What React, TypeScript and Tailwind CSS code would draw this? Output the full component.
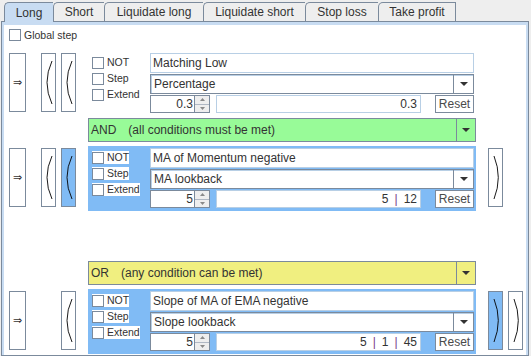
import React from 'react';

type Paren = 'none' | 'white' | 'blue';

interface Condition {
  name: string;
  param: string;
  spin: string;
  value: string[];
  active: boolean;
  left: [Paren, Paren];
  right: [Paren, Paren];
}

const TABS = [
  { label: 'Long', w: 'w-[49px]', active: true },
  { label: 'Short', w: 'w-[51px]' },
  { label: 'Liquidate long', w: 'w-[99px]' },
  { label: 'Liquidate short', w: 'w-[102px]' },
  { label: 'Stop loss', w: 'w-[73px]' },
  { label: 'Take profit', w: 'w-[78px] border-r' },
];

const CONDITIONS: Condition[] = [
  { name: 'Matching Low', param: 'Percentage', spin: '0.3', value: ['0.3'], active: false, left: ['white', 'white'], right: ['none', 'none'] },
  { name: 'MA of Momentum negative', param: 'MA lookback', spin: '5', value: ['5', '12'], active: true, left: ['white', 'blue'], right: ['white', 'none'] },
  { name: 'Slope of MA of EMA negative', param: 'Slope lookback', spin: '5', value: ['5', '1', '45'], active: true, left: ['none', 'white'], right: ['blue', 'white'] },
];

const DownTri = () => (
  <svg width="8" height="4" viewBox="0 0 8 4">
    <polygon points="0,0 8,0 4,4" fill="#333333" />
  </svg>
);

const CheckItem = ({ label }: { label: string }) => (
  <div className="flex items-center h-[13px] bg-white self-start">
    <div className="w-[12px] h-[12px] border border-[#7b8a9c] bg-white" />
    <span className="ml-[3px] text-[10.5px] leading-none">{label}</span>
  </div>
);

const ParenSlot = ({ kind, side }: { kind: Paren; side: 'l' | 'r' }) => {
  if (kind === 'none') return <div className="w-[15px] shrink-0" />;
  return (
    <div className={`w-[15px] h-[59px] mt-[2px] shrink-0 border border-[#7b8a9c] ${kind === 'blue' ? 'bg-[#80bbf5]' : 'bg-white'}`}>
      <svg width="13" height="57" viewBox="0 0 13 57">
        <path d={side === 'l' ? 'M10 7 Q0 28.5 10 50' : 'M5 7 Q13.6 28.5 5 50'} stroke="#000" strokeWidth="0.9" fill="none" />
      </svg>
    </div>
  );
};

const Row = ({ c, className }: { c: Condition; className: string }) => (
  <div className={`flex items-start ${className}`}>
    <div className="w-[17px] h-[59px] mt-[2px] shrink-0 border border-[#7b8a9c] bg-white flex items-center justify-center text-[11px] font-['DejaVu_Sans',sans-serif]">
      ⇒
    </div>
    <div className="ml-[15px]"><ParenSlot kind={c.left[0]} side="l" /></div>
    <div className="ml-[5px]"><ParenSlot kind={c.left[1]} side="l" /></div>
    <div className={`ml-[12px] w-[388px] h-[65px] shrink-0 flex pt-[2px] pl-[2px] pr-[2px] ${c.active ? 'bg-[#80bbf5]' : ''}`}>
      <div className="w-[60px] pl-[2px] pt-[3px] flex flex-col gap-[3px]">
        <CheckItem label="NOT" />
        <CheckItem label="Step" />
        <CheckItem label="Extend" />
      </div>
      <div className="w-[324px] flex flex-col">
        <div className="h-[20px] border border-[#b8cfe5] bg-white flex items-center pl-[2px]">{c.name}</div>
        <div className="h-[20px] mt-[1px] border border-[#7b8a9c] bg-white flex shadow-[inset_1px_1px_0_#b8cfe5]">
          <div className="flex-1 flex items-center pl-[3px]">{c.param}</div>
          <div className="w-[20px] border-l border-[#7b8a9c] flex items-center justify-center">
            <DownTri />
          </div>
        </div>
        <div className="h-[18px] mt-[1px] flex">
          <div className="w-[60px] border border-[#7b8a9c] bg-white flex">
            <div className="flex-1 flex items-center justify-end pr-[1px]">{c.spin}</div>
            <div className="w-[15px] border-l border-[#7b8a9c] bg-[#eeeeee] flex flex-col">
              <div className="flex-1 border-b border-[#b0b8c4] flex items-center justify-center">
                <svg width="5" height="3" viewBox="0 0 5 3"><polygon points="0,3 5,3 2.5,0" fill="#8a8a8a" /></svg>
              </div>
              <div className="flex-1 flex items-center justify-center">
                <svg width="5" height="3" viewBox="0 0 5 3"><polygon points="0,0 5,0 2.5,3" fill="#8a8a8a" /></svg>
              </div>
            </div>
          </div>
          <div className="ml-[6px] w-[205px] border border-[#b8cfe5] bg-white flex items-center justify-end pr-[3px] whitespace-nowrap">
            {c.value.map((v, i) => (
              <React.Fragment key={i}>
                {i > 0 && <span className="mx-[6px] text-[#7a3a8a]">|</span>}
                <span>{v}</span>
              </React.Fragment>
            ))}
          </div>
          <div className="ml-[14px] w-[39px] border border-[#7b8a9c] bg-white flex items-center justify-center text-[#4a4a4a]">
            Reset
          </div>
        </div>
      </div>
    </div>
    <div className="ml-[12px]"><ParenSlot kind={c.right[0]} side="r" /></div>
    <div className="ml-[5px]"><ParenSlot kind={c.right[1]} side="r" /></div>
  </div>
);

const OpBar = ({ label, desc, bg, className }: { label: string; desc: string; bg: string; className: string }) => (
  <div className={`ml-[79px] w-[388px] h-[24px] flex border border-[#7b8a9c] ${bg} ${className}`}>
    <div className="flex-1 flex items-center pl-[2px] whitespace-nowrap">
      <span>{label}</span>
      <span className="ml-[12px]">{desc}</span>
    </div>
    <div className="w-[19px] border-l border-[#7b8a9c] flex items-center justify-center">
      <DownTri />
    </div>
  </div>
);

export default function App() {
  return (
    <div className="w-[531px] h-[356px] overflow-hidden bg-[#eeeeee] font-['Liberation_Sans',Arial,sans-serif] text-[12px] text-[#333333] leading-[14px]">
      <div className="flex items-end h-[21px] pl-[4px]">
        {TABS.map(t => (
          <div
            key={t.label}
            className={`${t.w} flex items-center justify-center border-t border-l border-[#7b8a9c] rounded-tl-[5px] whitespace-nowrap ${
              t.active ? 'h-[20px] -mb-[1px] relative z-10 bg-[#c8dcf2]' : 'h-[19px] bg-[#eeeeee]'
            }`}
          >
            {t.label}
          </div>
        ))}
      </div>
      <div className="ml-[1px] w-[528px] h-[335px] border border-[#7b8a9c]">
        <div className="h-full border-t-[3px] border-x-[2px] border-[#c8dcf2] bg-white">
          <div className="flex items-center ml-[5px] mt-[4px] h-[12px]">
            <div className="w-[12px] h-[12px] border border-[#7b8a9c] bg-white" />
            <span className="ml-[3px] text-[10.5px] leading-none">Global step</span>
          </div>
          <div className="flex flex-col pl-[5px]">
            <Row c={CONDITIONS[0]} className="mt-[10px]" />
            <OpBar label="AND" desc="(all conditions must be met)" bg="bg-[#98fb98]" className="mt-[2px]" />
            <Row c={CONDITIONS[1]} className="mt-[4px]" />
            <OpBar label="OR" desc="(any condition can be met)" bg="bg-[#f0ef80]" className="mt-[50px]" />
            <Row c={CONDITIONS[2]} className="mt-[4px]" />
          </div>
        </div>
      </div>
    </div>
  );
}
